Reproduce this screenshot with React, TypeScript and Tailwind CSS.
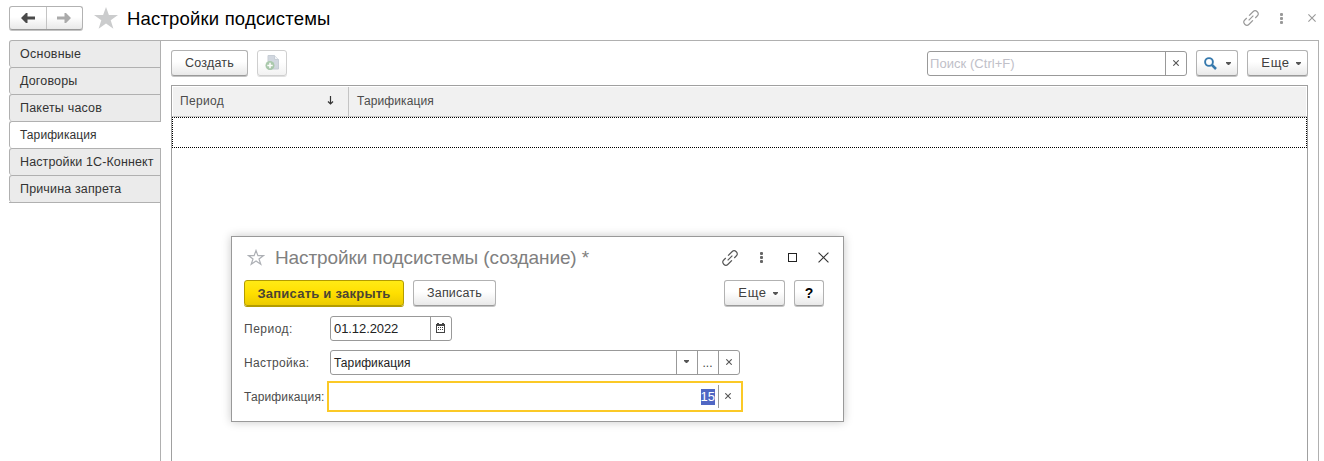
import type { ReactNode } from "react";

const buttonBase =
  "flex shrink-0 items-center justify-center rounded-[3px] border border-[#b2b2b2] border-b-[#9a9a9a] bg-linear-to-b from-white from-45% to-[#e9e9e9] text-[#404040] shadow-[0_1px_0_#c4c4c4]";

function LinkIcon({ color }: { color: string }) {
  return (
    <svg width="16" height="16" viewBox="0 0 16 16" fill="none" stroke={color} strokeWidth="1.150" className="shrink-0">
      <g transform="translate(8 8) rotate(-45)">
        <path d="M.800-2.500V-3H5.800a3 3 0 0 1 0 6H3" />
        <path d="M-.800 2.500V3h-5a3 3 0 0 1 0-6H-3" />
        <path d="M-3.300 0h6.600" />
      </g>
    </svg>
  );
}

function Dots({ color }: { color: string }) {
  return (
    <svg width="3" height="11" viewBox="0 0 3 11" fill={color} className="shrink-0">
      <rect width="3" height="3" rx="1" />
      <rect y="4" width="3" height="3" rx="1" />
      <rect y="8" width="3" height="3" rx="1" />
    </svg>
  );
}

function Cross({ size, color, width = 1.1 }: { size: number; color: string; width?: number }) {
  return (
    <svg width={size} height={size} viewBox="0 0 10 10" stroke={color} strokeWidth={(width * 10) / size} className="shrink-0">
      <path d="m.5.5 9 9m0-9-9 9" />
    </svg>
  );
}

function Caret() {
  return (
    <svg width="5" height="3" viewBox="0 0 5 3" fill="#555" className="shrink-0">
      <path d="M0 0h5v1L3 3H2L0 1z" />
    </svg>
  );
}

function Arrow({ color, flip = false }: { color: string; flip?: boolean }) {
  return (
    <svg width="14" height="10" viewBox="0 0 14 10" fill={color} className={flip ? "-scale-x-100" : ""}>
      <path d="M0 5 5 0h1.500v3.500H14v3H6.500V10H5z" />
    </svg>
  );
}

function Star({ outline = false }: { outline?: boolean }) {
  return outline ? (
    <svg width="18" height="17" viewBox="0 0 18 17" fill="none" stroke="#adb0b5" strokeWidth="1.200" className="shrink-0">
      <path d="m9 1.500 1.900 5.100h5.600L12 9.900l1.800 5.400L9 12l-4.800 3.300L6 9.900 1.500 6.600h5.600z" />
    </svg>
  ) : (
    <svg width="24" height="22" viewBox="0 0 24 22" fill="#cbcccd" className="shrink-0">
      <path d="m12 0 2.900 7.900H24l-7.300 5.300 2.700 8.600L12 16.600l-7.400 5.200 2.700-8.600L0 7.900h9.100z" />
    </svg>
  );
}

function MoreButton() {
  return (
    <button className={`${buttonBase} h-[26px] w-[61px] gap-[6px] pl-[7px] text-[13px] tracking-[0.600px]`}>
      <span>Еще</span>
      <span className="pt-px">
        <Caret />
      </span>
    </button>
  );
}

const tabs = [
  { label: "Основные", style: "text-[12.5px] tracking-[0.250px]" },
  { label: "Договоры", style: "text-[12.5px] tracking-[0.150px]" },
  { label: "Пакеты часов", style: "text-[12.5px] tracking-[0.200px]" },
  { label: "Тарификация", style: "text-[12px] tracking-[0.080px]", active: true },
  { label: "Настройки 1С-Коннект", style: "text-[12.5px] tracking-[0.120px]" },
  { label: "Причина запрета", style: "text-[12.5px] tracking-[0.150px]" },
];

function Sidebar() {
  return (
    <nav className="flex w-[152px] shrink-0 flex-col text-[#333]">
      {tabs.map((tab) => (
        <div
          key={tab.label}
          className={`flex h-[27px] shrink-0 items-center rounded-l-[3px] border-t border-l border-[#b0b0b0] pl-[10px] whitespace-nowrap ${
            tab.active ? "bg-white" : "border-r border-r-[#b0b0b0] bg-[#ebebeb]"
          }`}
        >
          <span className={tab.style}>{tab.label}</span>
        </div>
      ))}
      <div className="flex-1 border-t border-r border-[#b0b0b0]" />
    </nav>
  );
}

function Toolbar() {
  return (
    <div className="flex h-[26px] items-center">
      <button className={`${buttonBase} h-[26px] w-[77px] pt-px text-[12.5px] tracking-[0.200px]`}>Создать</button>
      <button className="ml-[9px] flex h-[26px] w-[30px] shrink-0 items-center justify-center rounded-[3px] border border-[#cfcfcf] bg-linear-to-b from-white from-45% to-[#f2f2f2] shadow-[0_1px_0_#e0e0e0]">
        <svg width="14" height="16" viewBox="0 0 14 16" className="opacity-60">
          <path d="M3 .5h6.500L13.500 4.500V14H3z" fill="#b4becb" stroke="#a3aebb" />
          <path d="M9.500.5v4h4" fill="#e5eaf0" stroke="#a3aebb" />
          <circle cx="5" cy="10.500" r="4.500" fill="#73a776" />
          <path d="M5 7.800v5.400M2.300 10.500h5.400" stroke="white" strokeWidth="1.500" />
        </svg>
      </button>
      <div className="mt-px ml-auto flex h-[25px] w-[260px] rounded-[3px] border border-[#999]">
        <span className="flex flex-1 items-center pl-[2px] text-[13px] tracking-[0.050px] text-[#c0c0c8]">Поиск (Ctrl+F)</span>
        <span className="flex w-[21px] items-center justify-center border-l border-[#999] pr-px pb-[2px]">
          <Cross size={6} color="#555" />
        </span>
      </div>
      <button className={`${buttonBase} ml-[9px] h-[26px] w-[42px] gap-[9px]`}>
        <svg width="13" height="13" viewBox="0 0 13 13" fill="none" stroke="#3679ad">
          <circle cx="5" cy="5" r="3.900" strokeWidth="1.900" />
          <path d="m8 8 4 4" strokeWidth="2.500" />
        </svg>
        <span className="pt-px">
          <Caret />
        </span>
      </button>
      <div className="ml-[9px]">
        <MoreButton />
      </div>
    </div>
  );
}

function Table() {
  return (
    <div className="mt-[9px] flex flex-1 flex-col border border-b-0 border-[#a0a0a0]">
      <div className="mx-px mt-px flex h-[29px] shrink-0 bg-[#f1f1f1] text-[12px] text-[#4c4c4c]">
        <div className="flex w-[176px] items-center justify-between border-r border-[#c4c4c4] pr-[14px] pb-[2px] pl-[7px]">
          <span className="tracking-[0.350px]">Период</span>
          <svg width="7" height="9" viewBox="0 0 7 9" fill="none" stroke="#333" strokeWidth="1.200">
            <path d="M3.500 0v8M1 5.500l2.500 2.500L6 5.500" />
          </svg>
        </div>
        <div className="flex items-center pb-[2px] pl-[8px] tracking-[0.100px]">Тарификация</div>
      </div>
      <div className="h-px shrink-0 bg-[#c8c8c8]" />
      <div className="h-[31px] shrink-0 border border-dotted border-black" />
    </div>
  );
}

function FieldRow({
  label,
  className,
  tracking,
  children,
}: {
  label: string;
  className: string;
  tracking: string;
  children: ReactNode;
}) {
  return (
    <div className={`flex items-center ${className}`}>
      <span className={`w-[86px] shrink-0 text-[12px] whitespace-nowrap text-[#4c4c4c] ${tracking}`}>{label}</span>
      {children}
    </div>
  );
}

const fieldCell = "flex w-[21px] shrink-0 items-center justify-center border-l border-[#999] pr-px";

function Dialog() {
  return (
    <section className="absolute top-[236px] left-[231px] flex h-[186px] w-[613px] flex-col border border-[#999] bg-white pl-[12px] shadow-[0_0_9px_rgba(0,0,0,0.22)]">
      <header className="flex h-[43px] shrink-0 items-center pr-[14px] pb-[2px]">
        <div className="ml-[3px]">
          <Star outline />
        </div>
        <h2 className="ml-[10px] pt-px text-[19px] tracking-[-0.110px] whitespace-nowrap text-[#808080]">
          Настройки подсистемы (создание) *
        </h2>
        <div className="ml-auto flex items-center">
          <LinkIcon color="#555" />
          <div className="ml-[22px]">
            <Dots color="#666" />
          </div>
          <div className="ml-[25px] h-[9px] w-[9px] border border-[#222]" />
          <div className="ml-[21px]">
            <Cross size={11} color="#333" />
          </div>
        </div>
      </header>
      <div className="flex h-[26px] shrink-0 pr-[19px]">
        <button className="flex h-[26px] w-[160px] items-center justify-center rounded-[3px] border border-[#b39c00] bg-linear-to-b from-[#ffea14] via-[#ffdf00] to-[#eccb00] pt-px text-[13px] font-bold tracking-[0.240px] text-[#4c4533] shadow-[0_1px_0_#b39c00]">
          Записать и закрыть
        </button>
        <button className={`${buttonBase} ml-[9px] h-[26px] w-[83px] pt-px text-[12.5px] tracking-[0.180px]`}>Записать</button>
        <div className="ml-auto">
          <MoreButton />
        </div>
        <button className={`${buttonBase} ml-[9px] h-[26px] w-[30px] text-[14px] font-bold`}>
          <span className="text-black">?</span>
        </button>
      </div>
      <FieldRow label="Период:" tracking="tracking-[0.500px]" className="mt-[10px]">
        <div className="flex h-[25px] w-[122px] rounded-[3px] border border-[#999]">
          <span className="flex flex-1 items-center pl-[3px] text-[13px] tracking-[-0.080px] text-[#222]">01.12.2022</span>
          <span className={`${fieldCell} pb-[2px]`}>
            <svg width="9" height="10" viewBox="0 0 9 10" fill="#444">
              <path d="M0 1h1V0h2v1h3V0h2v1h1v9H0zm1 2v6h7V3z" fillRule="evenodd" />
              <path d="M2 4h1v1H2zm2 0h1v1H4zm2 0h1v1H6zM2 6h1v1H2zm2 0h1v1H4zm2 0h1v1H6z" />
            </svg>
          </span>
        </div>
      </FieldRow>
      <FieldRow label="Настройка:" tracking="tracking-[0.300px]" className="mt-[9px]">
        <div className="flex h-[25px] w-[410px] rounded-[3px] border border-[#999]">
          <span className="flex flex-1 items-center pl-[3px] text-[12px] tracking-[0.080px] text-[#222]">Тарификация</span>
          <span className={`${fieldCell} pb-[2px]`}>
            <Caret />
          </span>
          <span className={`${fieldCell} text-[12px] text-[#444]`}>...</span>
          <span className={`${fieldCell} pb-[2px]`}>
            <Cross size={6} color="#555" />
          </span>
        </div>
      </FieldRow>
      <FieldRow label="Тарификация:" tracking="tracking-[0.120px]" className="mt-[6px]">
        <div className="-ml-[3px] flex h-[31px] w-[416px] items-center justify-end border-2 border-[#fbc926]">
          <span className="mr-[3px] bg-[#5067c4] text-[13px] leading-[16px] text-white">15</span>
          <span className="flex h-[23px] w-[23px] items-center border-l border-[#999] pb-[2px] pl-[6px]">
            <Cross size={6} color="#555" />
          </span>
        </div>
      </FieldRow>
    </section>
  );
}

export default function App() {
  return (
    <main className="relative flex h-[461px] w-[1324px] flex-col overflow-hidden bg-white font-['Liberation_Sans',Arial,sans-serif]">
      <header className="flex h-[40px] shrink-0 items-center pb-[4px] pl-[9px]">
        <div className={`${buttonBase} h-[24px] w-[74px]`}>
          <span className="flex h-full flex-1 items-center justify-center border-r border-[#c4c4c4]">
            <Arrow color="#4a4a4a" />
          </span>
          <span className="flex flex-1 items-center justify-center">
            <Arrow color="#aaa" flip />
          </span>
        </div>
        <div className="ml-[11px]">
          <Star />
        </div>
        <h1 className="ml-[9px] pt-px text-[18.5px] tracking-[0.180px] text-black">Настройки подсистемы</h1>
        <div className="ml-auto flex items-center pr-[8px]">
          <LinkIcon color="#999" />
          <div className="ml-[21px]">
            <Dots color="#999" />
          </div>
          <div className="ml-[25px]">
            <Cross size={8} color="#999" />
          </div>
        </div>
      </header>
      <div className="mr-[5px] ml-[9px] flex min-h-0 flex-1">
        <Sidebar />
        <div className="flex flex-1 flex-col border-t border-r border-[#b0b0b0] pt-[9px] pr-[10px] pl-[10px]">
          <Toolbar />
          <Table />
        </div>
      </div>
      <Dialog />
    </main>
  );
}
